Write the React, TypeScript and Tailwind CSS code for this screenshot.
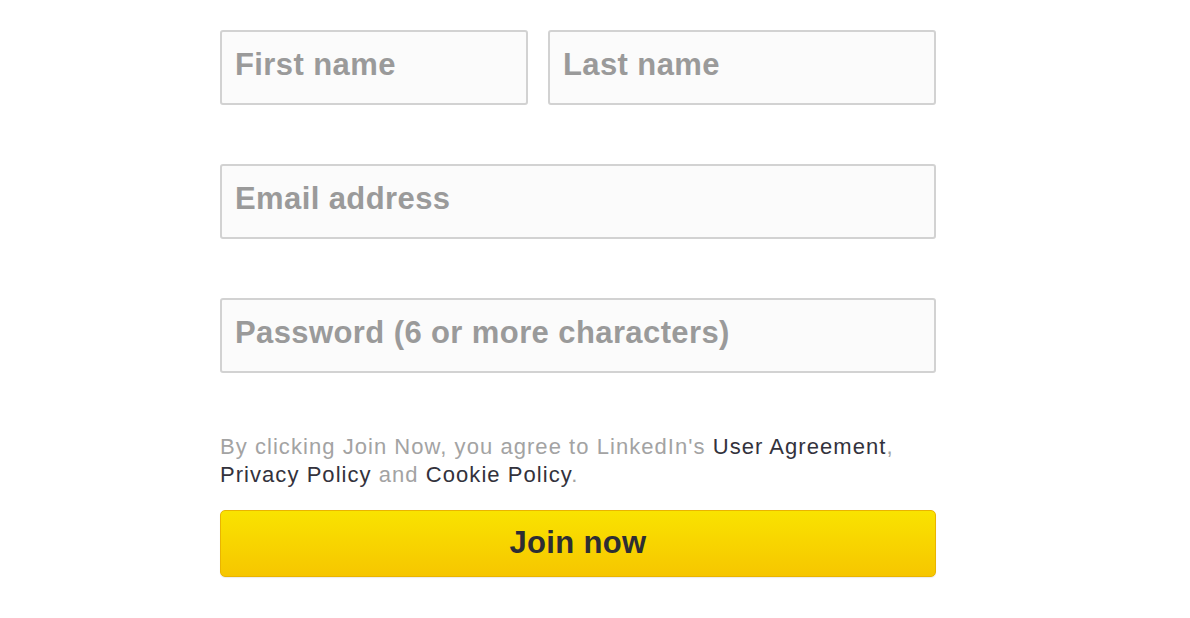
import React from "react";

const field =
  "h-[75px] rounded-[3px] border-2 border-[#d2d2d2] bg-[#fbfbfb] pl-[13px] pt-[17px] text-[31px] leading-[31px] font-bold tracking-[0.4px] text-[#9a9a9a]";

export default function App() {
  return (
    <div
      className="w-[1190px] h-[618px] bg-white overflow-hidden"
      style={{ fontFamily: '"Liberation Sans", Arial, sans-serif' }}
    >
      <div className="ml-[220px] w-[716px] pt-[30px] flex flex-col">
        <div className="flex gap-[20px]">
          <div className={`${field} w-[308px]`}>First name</div>
          <div className={`${field} flex-1`}>Last name</div>
        </div>
        <div className={`${field} mt-[59px]`}>Email address</div>
        <div className={`${field} mt-[59px]`}>Password (6 or more characters)</div>
        <p className="mt-[60px] text-[22px] leading-[28px] tracking-[1.05px] text-[#a3a3a3]">
          By clicking Join Now, you agree to LinkedIn's{" "}
          <span className="text-[#33323c]">User Agreement</span>,
          <br />
          <span className="text-[#33323c]">Privacy Policy</span> and{" "}
          <span className="text-[#33323c]">Cookie Policy</span>.
        </p>
        <button className="mt-[21px] h-[67px] rounded-[5px] border border-[#eab400] bg-gradient-to-b from-[#f9e300] to-[#f6c600] text-[31px] font-bold tracking-[0.35px] text-[#2d2d33] shadow-[0_1px_1px_rgba(0,0,0,0.08)]">
          Join now
        </button>
      </div>
    </div>
  );
}
